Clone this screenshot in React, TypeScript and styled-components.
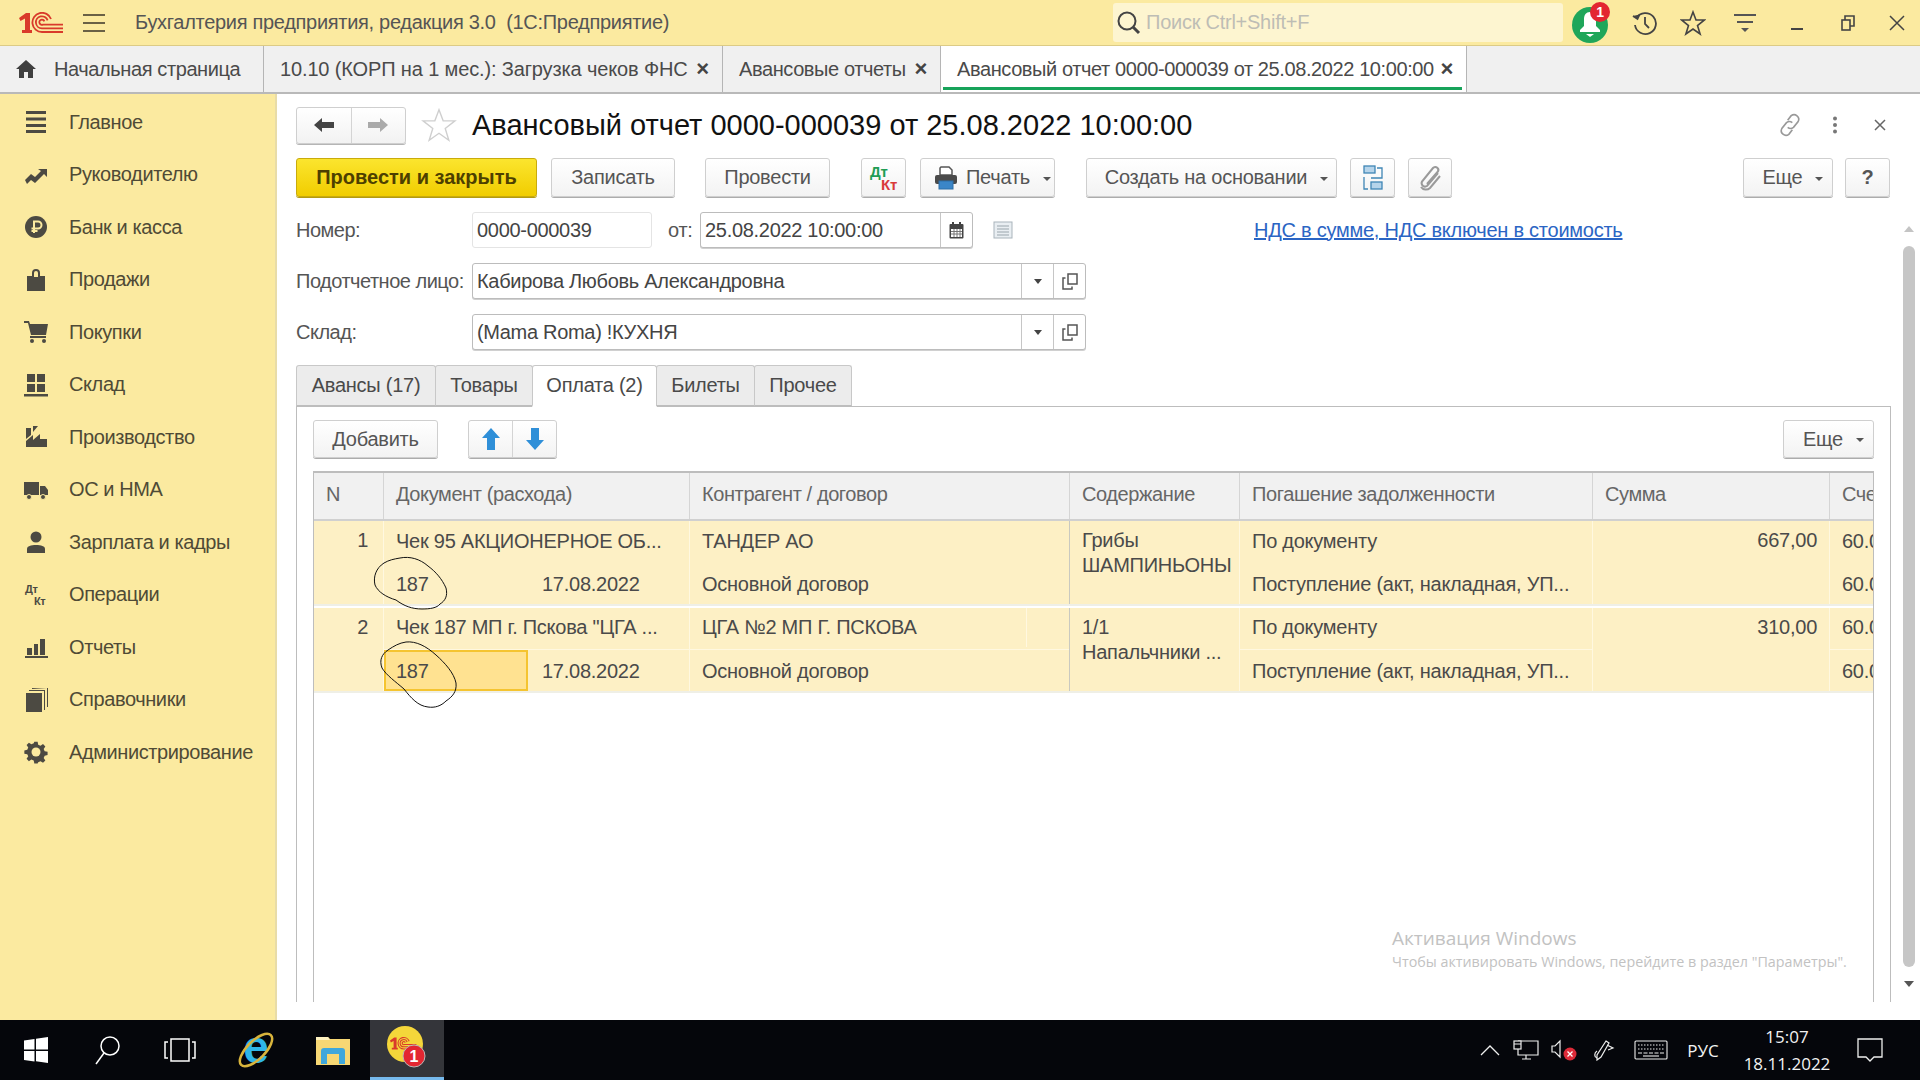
import React from "react";
import styled, { createGlobalStyle } from "styled-components";

const GlobalStyle = createGlobalStyle`
  html, body { margin: 0; padding: 0; background: #fff; }
  body { font-family: "Liberation Sans", Arial, sans-serif; color: #4a4a4a; }
  * { box-sizing: border-box; }
`;

const Page = styled.div`
  position: relative;
  width: 1920px;
  height: 1080px;
  overflow: hidden;
  display: flex;
  flex-direction: column;
  font-size: 20px;
  letter-spacing: -0.25px;
`;

/* top yellow bar */
const TopBar = styled.header`
  height: 46px;
  flex: none;
  display: flex;
  align-items: center;
  background: #fbeaa0;
  border-bottom: 1px solid #dccb86;
`;
const LogoBox = styled.div`
  width: 83px;
  padding-left: 19px;
  display: flex;
`;
const IconSlot = styled.div<{ $w: number }>`
  width: ${(p) => p.$w}px;
  flex: none;
  display: flex;
  align-items: center;
  justify-content: center;
`;
const AppTitle = styled.div`
  margin-left: 30px;
  width: 978px;
  white-space: pre;
  color: #555;
  letter-spacing: -0.3px;
`;
const SearchBox = styled.div`
  width: 450px;
  height: 39px;
  background: #fdf5d0;
  border-radius: 3px;
  display: flex;
  align-items: center;
  padding-left: 2px;
  color: #bdbdb5;
  gap: 5px;
`;

/* open windows tabs */
const TabsBar = styled.nav`
  height: 48px;
  flex: none;
  display: flex;
  background: #f0f0f0;
  border-bottom: 2px solid #b9b9b9;
`;
const WinTab = styled.div<{ $w: number; $active?: boolean; $ls?: number }>`
  position: relative;
  width: ${(p) => p.$w}px;
  flex: none;
  display: flex;
  align-items: center;
  justify-content: space-between;
  padding: 0 13px 0 16px;
  border-right: 1px solid #b5b5b5;
  background: ${(p) => (p.$active ? "#fff" : "transparent")};
  color: #4a4a4a;
  letter-spacing: ${(p) => p.$ls ?? -0.4}px;
  white-space: nowrap;
  &::after {
    content: "";
    display: ${(p) => (p.$active ? "block" : "none")};
    position: absolute;
    left: 2px;
    right: 4px;
    bottom: 2px;
    height: 3px;
    background: #17a35a;
  }
`;
const HomeTab = styled(WinTab)`
  justify-content: flex-start;
  gap: 18px;
`;
const TabClose = styled.span`
  font-weight: bold;
  font-size: 22px;
  color: #444;
`;

const Main = styled.div`
  flex: 1;
  display: flex;
  min-height: 0;
`;

/* sidebar */
const Sidebar = styled.aside`
  width: 277px;
  flex: none;
  background: #fbeaa0;
  border-right: 2px solid #e8dca8;
  padding-top: 2px;
`;
const SideItem = styled.div`
  height: 52.5px;
  display: flex;
  align-items: center;
  padding-left: 24px;
  gap: 21px;
  color: #4f4a36;
  letter-spacing: -0.4px;
`;

/* form */
const Form = styled.section`
  width: 1614px;
  flex: none;
  padding: 13px 0 18px 19px;
  display: flex;
  flex-direction: column;
  background: #fff;
`;
const HeaderRow = styled.div`
  height: 36px;
  flex: none;
  display: flex;
  align-items: center;
`;
const NavGroup = styled.div`
  width: 110px;
  height: 37px;
  flex: none;
  display: flex;
  border: 1px solid #cfcfcf;
  border-radius: 3px;
  background: linear-gradient(#fff, #f2f2f2);
  box-shadow: 0 1px 0 #b5b5b5;
`;
const NavBtn = styled.div<{ $sep?: boolean }>`
  flex: 1;
  display: flex;
  align-items: center;
  justify-content: center;
  border-right: ${(p) => (p.$sep ? "1px solid #d4d4d4" : "none")};
`;
const Title = styled.h1`
  margin: 0;
  flex: 1;
  min-width: 0;
  font-weight: normal;
  font-size: 29px;
  letter-spacing: 0;
  color: #111;
  white-space: nowrap;
`;
const HeaderTools = styled.div`
  display: flex;
  align-items: center;
  flex: none;
  margin-right: -9px;
`;

const CommandBar = styled.div`
  margin-top: 15px;
  height: 39px;
  flex: none;
  display: flex;
  align-items: stretch;
`;
const Btn = styled.div<{ $w: number; $gap?: number; $primary?: boolean }>`
  width: ${(p) => p.$w}px;
  margin-left: ${(p) => p.$gap ?? 0}px;
  flex: none;
  display: flex;
  align-items: center;
  justify-content: center;
  gap: 8px;
  border-radius: 3px;
  white-space: nowrap;
  border: 1px solid ${(p) => (p.$primary ? "#c9ab0c" : "#cfcfcf")};
  background: ${(p) =>
    p.$primary ? "linear-gradient(#fbe52e, #f1cd00)" : "linear-gradient(#fff, #f3f3f3)"};
  color: ${(p) => (p.$primary ? "#4d4000" : "#555")};
  font-weight: ${(p) => (p.$primary ? "bold" : "normal")};
  letter-spacing: ${(p) => (p.$primary ? "0" : "-0.25px")};
  box-shadow: 0 1px 0 ${(p) => (p.$primary ? "#b39a10" : "#acacac")};
`;
const Caret = styled.span`
  width: 0;
  height: 0;
  border-left: 4px solid transparent;
  border-right: 4px solid transparent;
  border-top: 4px solid #555;
  margin: 2px -10px 0 5px;
`;

const FieldRow = styled.div`
  margin-top: 15px;
  height: 36px;
  flex: none;
  display: flex;
  align-items: center;
`;
const Label = styled.div`
  width: 176px;
  flex: none;
  color: #555;
  letter-spacing: -0.5px;
  white-space: nowrap;
`;
const Field = styled.div<{ $w: number; $soft?: boolean }>`
  width: ${(p) => p.$w}px;
  height: 36px;
  flex: none;
  display: flex;
  align-items: stretch;
  border: 1px solid ${(p) => (p.$soft ? "#e4e4e4" : "#bcbcbc")};
  border-radius: 3px;
  background: #fff;
  box-shadow: ${(p) => (p.$soft ? "none" : "0 1px 0 #d0d0d0")};
`;
const FieldText = styled.div`
  flex: 1;
  display: flex;
  align-items: center;
  padding-left: 4px;
  color: #444;
  letter-spacing: -0.3px;
  white-space: nowrap;
`;
const FieldBtn = styled.div<{ $w: number }>`
  width: ${(p) => p.$w}px;
  flex: none;
  border-left: 1px solid #c6c6c6;
  display: flex;
  align-items: center;
  justify-content: center;
`;
const FromLabel = styled.div`
  margin-left: 16px;
  width: 32px;
  color: #555;
`;
const DocLink = styled.a`
  margin-left: 221px;
  color: #2b65c4;
  text-decoration: underline;
  white-space: nowrap;
`;

/* form tabs */
const FormTabs = styled.div`
  margin-top: 15px;
  height: 41px;
  flex: none;
  display: flex;
  position: relative;
  z-index: 1;
`;
const FormTab = styled.div<{ $w: number; $active?: boolean }>`
  width: ${(p) => p.$w}px;
  display: flex;
  align-items: center;
  justify-content: center;
  background: ${(p) => (p.$active ? "#fff" : "#ececec")};
  border: 1px solid #c8c8c8;
  border-bottom: ${(p) => (p.$active ? "2px solid #fff" : "1px solid #bdbdbd")};
  border-radius: 3px 3px 0 0;
  margin-left: -1px;
  color: #4a4a4a;
  height: ${(p) => (p.$active ? "42px" : "41px")};
  &:first-child {
    margin-left: 0;
  }
`;
const Panel = styled.div`
  flex: 1;
  min-height: 0;
  display: flex;
  flex-direction: column;
  padding: 13px 16px 0;
  border: 1px solid #bdbdbd;
  border-width: 1px 1px 0 1px;
`;
const PanelBar = styled.div`
  height: 38px;
  flex: none;
  display: flex;
  align-items: stretch;
  justify-content: space-between;
`;
const PanelLeft = styled.div`
  display: flex;
`;
const ArrowGroup = styled.div`
  width: 89px;
  margin-left: 30px;
  display: flex;
  border: 1px solid #cfcfcf;
  border-radius: 3px;
  background: linear-gradient(#fff, #f3f3f3);
  box-shadow: 0 1px 0 #acacac;
`;

/* table */
const Table = styled.div`
  margin-top: 13px;
  flex: 1;
  min-height: 0;
  border: 1px solid #bdbdbd;
  border-width: 2px 1px 0 1px;
  overflow: hidden;
`;
const COLS = "70px 306px 380px 170px 353px 237px 45px";
const HeadRow = styled.div`
  display: grid;
  grid-template-columns: ${COLS};
  height: 48px;
  background: #f1f1f1;
  border-bottom: 2px solid #d0d0d0;
  letter-spacing: -0.4px;
`;
const HeadCell = styled.div<{ $last?: boolean }>`
  display: flex;
  align-items: center;
  padding: 0 0 4px 12px;
  color: #666;
  border-right: ${(p) => (p.$last ? "none" : "1px solid #d5d5d5")};
  white-space: nowrap;
  overflow: hidden;
`;
const DataRow = styled.div`
  display: grid;
  grid-template-columns: ${COLS};
  height: 83px;
  margin-bottom: 4px;
  background: #fdf0c5;
  box-shadow: 0 2px 0 #efefe6;
`;
const NumCell = styled.div`
  border-right: 1px solid #fff8e0;
  padding: 8px 15px 0 0;
  text-align: right;
  color: #4a4a4a;
`;
const Col = styled.div<{ $grey?: boolean }>`
  display: grid;
  grid-template-rows: 42px 41px;
  border-right: 1px solid ${(p) => (p.$grey ? "#c9c9c0" : "#fff8e0")};
  min-width: 0;
`;
const Line = styled.div<{ $split?: boolean; $second?: boolean }>`
  display: flex;
  align-items: center;
  padding: ${(p) => (p.$second ? "1px 0 0 12px" : "0 0 2px 12px")};
  color: #4a4a4a;
  white-space: nowrap;
  overflow: hidden;
  border-bottom: ${(p) => (p.$split ? "1px solid #fff8e0" : "none")};
`;
const PartnerText = styled.div`
  width: 325px;
  height: 100%;
  display: flex;
  align-items: center;
  border-right: 1px solid #fff8e0;
`;
const DocSecond = styled.div`
  display: flex;
  align-items: stretch;
  min-width: 0;
`;
const DocNumber = styled.div<{ $selected?: boolean }>`
  width: 144px;
  flex: none;
  display: flex;
  align-items: center;
  padding: ${(p) => (p.$selected ? "1px 0 0 10px" : "1px 0 0 12px")};
  background: ${(p) => (p.$selected ? "#ffe291" : "transparent")};
  border: ${(p) => (p.$selected ? "2px solid #f5c430" : "none")};
`;
const DocDate = styled.div`
  padding: 1px 0 0 14px;
  display: flex;
  align-items: center;
`;
const TextCell = styled.div`
  border-right: 1px solid #fff8e0;
  padding: 7px 4px 0 12px;
  line-height: 24.5px;
  white-space: pre;
`;
const SumCell = styled.div`
  border-right: 1px solid #fff8e0;
  padding-top: 8px;
  padding-right: 12px;
  text-align: right;
`;

/* scrollbar gutter */
const ScrollGutter = styled.div`
  flex: 1;
  display: flex;
  flex-direction: column;
  align-items: center;
  padding: 132px 0 0 7px;
  background: #fff;
`;
const ScrollUp = styled.div`
  width: 0;
  height: 0;
  border-left: 5px solid transparent;
  border-right: 5px solid transparent;
  border-bottom: 6px solid #c4c4c4;
`;
const ScrollThumb = styled.div`
  margin-top: 14px;
  width: 12px;
  height: 721px;
  background: #c6c6c6;
  border-radius: 6px;
`;
const ScrollDown = styled.div`
  margin-top: 14px;
  width: 0;
  height: 0;
  border-left: 5px solid transparent;
  border-right: 5px solid transparent;
  border-top: 6px solid #555;
`;

/* windows taskbar */
const Taskbar = styled.footer`
  height: 60px;
  flex: none;
  display: flex;
  align-items: stretch;
  background: #05060b;
  color: #f2f2f2;
  font-family: "Open Sans", sans-serif;
  letter-spacing: 0;
`;
const TaskSlot = styled.div<{ $w: number; $active?: boolean }>`
  width: ${(p) => p.$w}px;
  flex: none;
  display: flex;
  align-items: center;
  justify-content: center;
  background: ${(p) => (p.$active ? "#34353a" : "transparent")};
  border-bottom: ${(p) => (p.$active ? "3px solid #76b9ed" : "none")};
`;
const TaskSpacer = styled.div`
  flex: 1;
`;
const Lang = styled(TaskSlot)`
  font-size: 17px;
`;
const Clock = styled.div`
  width: 118px;
  flex: none;
  display: flex;
  flex-direction: column;
  align-items: center;
  justify-content: center;
  font-size: 17px;
  line-height: 27px;
`;

/* things lying over the page */
const Watermark = styled.div`
  position: absolute;
  left: 1392px;
  top: 925px;
  font-family: "Open Sans", sans-serif;
  letter-spacing: 0;
  color: #c2c2c2;
  white-space: nowrap;
`;
const WatermarkTitle = styled.div`
  font-size: 19px;
  line-height: 27px;
`;
const WatermarkText = styled.div`
  font-size: 14.3px;
  line-height: 20px;
`;
const Scribble = styled.svg<{ $x: number; $y: number }>`
  position: absolute;
  left: ${(p) => p.$x}px;
  top: ${(p) => p.$y}px;
  fill: none;
  stroke: #111;
  stroke-width: 1;
`;

const LogoMark = () => (
  <>
    <path d="M0 6 L7 1 H11 V18 H13 V21 H3 V18 H6 V6.5 L1.5 9 Z" fill="#d93a2b" />
    <g fill="none" stroke="#d93a2b" strokeWidth="1.8">
      <path d="M44 20 H23 A9.6 9.6 0 1 1 32 7" />
      <path d="M44 16.3 H23 A6 6 0 1 1 28.6 8.4" />
      <path d="M44 12.6 H24 A2.6 2.6 0 1 1 25.4 9.4" />
    </g>
  </>
);
const Logo1C = () => (
  <svg width="44" height="21" viewBox="0 0 44 21">
    <LogoMark />
  </svg>
);

const Burger = () => (
  <svg width="22" height="18" viewBox="0 0 22 18" stroke="#6a6145" strokeWidth="2">
    <path d="M0 1h22M0 9h22M0 17h22" />
  </svg>
);

const SearchIcon = () => (
  <svg width="26" height="26" viewBox="0 0 26 26" fill="none" stroke="#444" strokeWidth="2">
    <circle cx="12" cy="11" r="8.5" />
    <path d="M18 17l6 6" strokeWidth="3" />
  </svg>
);

const Bell = () => (
  <svg width="46" height="44" viewBox="0 0 46 44">
    <circle cx="20" cy="24" r="18" fill="#1fa65a" />
    <path d="M20 11c-4 0-6 3-6 7v7l-4 4v2h20v-2l-4-4v-7c0-4-2-7-6-7z" fill="#fff" />
    <path d="M16 33h8l-4 3z" fill="#fff" />
    <circle cx="30" cy="11" r="10" fill="#e32631" />
    <text x="30" y="16" fontFamily="Liberation Sans" fontSize="14" fontWeight="bold" fill="#fff" textAnchor="middle">1</text>
  </svg>
);

const History = () => (
  <svg width="26" height="26" viewBox="0 0 26 26" fill="none" stroke="#444" strokeWidth="1.8">
    <path d="M4.5 8A10.5 10.5 0 1 1 3 15" />
    <path d="M1 6l4.5 3 2-4.5" fill="#444" />
    <path d="M13 7v7l4 4" />
  </svg>
);

const StarIcon = ({ size = 26, color = "#444", sw = 1.6 }: { size?: number; color?: string; sw?: number }) => (
  <svg width={size} height={size} viewBox="0 0 26 26" fill="none" stroke={color} strokeWidth={sw}>
    <path d="M13 2l3 8h8.5l-7 5.5 2.6 8.5L13 19l-7.100 5 2.600-8.500-7-5.500H10z" />
  </svg>
);

const FilterIcon = () => (
  <svg width="24" height="20" viewBox="0 0 24 20" stroke="#555" strokeWidth="2" fill="#555">
    <path d="M1 2h22M4 9h16" />
    <path d="M8 15h8l-4 4z" stroke="none" />
  </svg>
);

const WinMin = () => (
  <svg width="14" height="14" viewBox="0 0 14 14" stroke="#444" strokeWidth="2">
    <path d="M1 13h12" />
  </svg>
);
const WinRestore = () => (
  <svg width="14" height="16" viewBox="0 0 14 16" stroke="#444" strokeWidth="1.6" fill="none">
    <rect x="1" y="5" width="8" height="10" />
    <path d="M4 5V1h9v10H9" />
  </svg>
);
const WinClose = () => (
  <svg width="16" height="16" viewBox="0 0 16 16" stroke="#444" strokeWidth="1.5">
    <path d="M1 1l14 14M15 1L1 15" />
  </svg>
);

const HomeIcon = () => (
  <svg width="20" height="18" viewBox="0 0 20 18" fill="#3f3f3f">
    <path d="M10 0L0 9h3v9h5v-6h4v6h5V9h3z" />
  </svg>
);

const ArrowSvg = styled.svg<{ $flipX?: boolean; $flipY?: boolean }>`
  transform: scale(${(p) => (p.$flipX ? -1 : 1)}, ${(p) => (p.$flipY ? -1 : 1)});
`;

const ArrowH = ({ flip, color }: { flip?: boolean; color: string }) => (
  <ArrowSvg $flipX={flip} width="20" height="16" viewBox="0 0 20 16" fill={color}>
    <path d="M0 8l8-7v4h12v6H8v4z" />
  </ArrowSvg>
);

const ArrowV = ({ down }: { down?: boolean }) => (
  <ArrowSvg $flipY={down} width="18" height="22" viewBox="0 0 18 22">
    <path d="M9 0l9 10h-5v12H5V10H0z" fill="#2f8fd8" />
  </ArrowSvg>
);

const LinkIcon = () => (
  <svg width="28" height="28" viewBox="0 0 24 24" fill="none" stroke="#999" strokeWidth="1.4">
    <path d="M10 8l3-4a4 4 0 0 1 6 5l-4 5a4 4 0 0 1-5 0" />
    <path d="M14 16l-3 4a4 4 0 0 1-6-5l4-5a4 4 0 0 1 5 0" />
  </svg>
);

const DotsIcon = () => (
  <svg width="6" height="18" viewBox="0 0 6 18" fill="#777">
    <circle cx="3" cy="2.500" r="2" />
    <circle cx="3" cy="9" r="2" />
    <circle cx="3" cy="15.500" r="2" />
  </svg>
);

const SmallClose = () => (
  <svg width="12" height="12" viewBox="0 0 12 12" stroke="#666" strokeWidth="1.5">
    <path d="M1 1l10 10M11 1L1 11" />
  </svg>
);

const DtKt = () => (
  <svg width="30" height="30" viewBox="0 0 30 30" fontFamily="Liberation Sans" fontSize="15" fontWeight="bold">
    <text x="1" y="14" fill="#1f9d55">Дт</text>
    <text x="12" y="27" fill="#d93a3a">Кт</text>
  </svg>
);

const Printer = () => (
  <svg width="24" height="24" viewBox="0 0 24 24">
    <path d="M7 1h8l3 3v5H6V2z" fill="#fff" stroke="#555" strokeWidth="1.500" />
    <rect x="1" y="9" width="22" height="9" rx="2" fill="#4a4a4a" />
    <rect x="5" y="15" width="14" height="8" fill="#3b86c8" stroke="#2d6fa8" />
  </svg>
);

const Structure = () => (
  <svg width="20" height="25" viewBox="0 0 20 25" fill="#b6d4ea" stroke="#3f86b5" strokeWidth="1.300">
    <rect x="1" y="1" width="11" height="7" />
    <rect x="8" y="17" width="11" height="7" />
    <path d="M14 3h5v10H8M1 12v12h4" fill="none" />
  </svg>
);

const Clip = () => (
  <svg width="24" height="28" viewBox="0 0 24 28" fill="none" stroke="#9a9a9a" strokeWidth="2">
    <path d="M20 9L9 22a3.500 3.500 0 0 1-5-4.500L15 4a3 3 0 0 1 4.500 4L9 20" />
    <path d="M22 12L12 24a6 6 0 0 1-9-1" />
  </svg>
);

const CalendarIcon = () => (
  <svg width="15" height="18" viewBox="0 0 15 18">
    <rect x="0.500" y="3" width="14" height="14.500" rx="1" fill="#444" />
    <path d="M4 1v3M11 1v3" stroke="#444" strokeWidth="2" />
    <rect x="2" y="8" width="11" height="8" fill="#fff" />
    <path d="M2 10.500h11M2 13h11M5 8v8M8 8v8M11 8v8" stroke="#777" />
  </svg>
);

const NoteIcon = () => (
  <svg width="20" height="20" viewBox="0 0 20 20">
    <rect x="1" y="2" width="18" height="16" fill="#e9eef2" stroke="#a9b4bb" />
    <path d="M4 6h12M4 9h12M4 12h12M4 15h12" stroke="#9aa5ac" />
  </svg>
);

const OpenIcon = () => (
  <svg width="16" height="17" viewBox="0 0 16 17" fill="none" stroke="#555" strokeWidth="1.500">
    <rect x="6" y="1" width="9" height="10" />
    <path d="M3.500 5H1v11h9v-2.500" />
  </svg>
);

const DropCaret = styled(Caret)`
  border-left-width: 4.5px;
  border-right-width: 4.5px;
  border-top-width: 5px;
  border-top-color: #444;
  margin: 0;
`;

/* sidebar glyphs */
const sideIcons: Record<string, React.ReactNode> = {
  main: <path d="M2 1h20v3H2zM2 7.500h20v3H2zM2 14h20v3H2zM2 20h20v3H2z" />,
  boss: <path d="M1 17l6-6 4 3 6-6-3-2h9v8l-3-3-9 9-4-3-4 4z" />,
  bank: (
    <g>
      <circle cx="12" cy="12" r="11" />
      <path d="M10 18V6.500h4a3.500 3.500 0 0 1 0 7H7.500M7.500 16h6" fill="none" stroke="#fbeaa0" strokeWidth="2" />
    </g>
  ),
  sales: (
    <g>
      <path d="M3 8h5V5a4 4 0 0 1 8 0v3h5v15H3z" />
      <path d="M10 9V5a2 2 0 0 1 4 0v4z" fill="#fbeaa0" />
    </g>
  ),
  buy: (
    <g>
      <path d="M0 1h5l1 3h18l-2 11H7L4 3H0z" />
      <rect x="6" y="16" width="16" height="2" />
      <circle cx="8" cy="21" r="2" />
      <circle cx="20" cy="21" r="2" />
    </g>
  ),
  stock: <path d="M3 1h8v8H3zM13 1h8v8h-8zM3 11h8v8H3zM13 11h8v8h-8zM0 21h24v2.500H0z" />,
  prod: <path d="M2 3h5v7l-5 4zM9 1h5l-5 6zM2 22v-6l7-6v5l7-6v5l7 0v8z" />,
  truck: (
    <g>
      <path d="M0 4h15v13H0zM16 8h5l3 4v5h-8z" />
      <circle cx="5" cy="19" r="2.500" stroke="#fbeaa0" />
      <circle cx="19" cy="19" r="2.500" stroke="#fbeaa0" />
    </g>
  ),
  person: (
    <g>
      <circle cx="12" cy="7" r="5.500" />
      <path d="M3 23v-4c0-3 4-4 9-4s9 1 9 4v4z" />
    </g>
  ),
  chart: <path d="M3 13h5v7H3zM10 9h4v11h-4zM16 4h5v16h-5zM1 21h23v2H1z" />,
  books: (
    <g>
      <rect x="2" y="5" width="16" height="19" />
      <path d="M20 3v19h1V2H5v1zM23 0v19h1V0H8v1z" />
    </g>
  ),
  gear: (
    <g>
      <path d="M10 1h4l.7 3.500 2.800 1.200 3-2 2.800 2.800-2 3 1.200 2.800 3.500.7v4l-3.500.7-1.200 2.800 2 3-2.800 2.800-3-2-2.800 1.200L14 27h-4l-.7-3.500-2.800-1.200-3 2-2.800-2.800 2-3L1.500 16 -2 15.300v-4L1.500 10.600l1.200-2.800-2-3L3.500 2l3 2 2.800-1.200z" transform="translate(2 1) scale(.83)" />
      <circle cx="12" cy="12" r="4.500" fill="#fbeaa0" />
    </g>
  ),
};

const SideIcon = ({ name }: { name: string }) => (
  <svg width="24" height="24" viewBox="0 0 24 24" fill="#4c4a42">
    {sideIcons[name]}
  </svg>
);

const SideDtKt = () => (
  <svg width="24" height="24" viewBox="0 0 24 24" fontFamily="Liberation Sans" fontSize="11" fontWeight="bold" fill="#4c4a42">
    <text x="1" y="10">Дт</text>
    <text x="10" y="22">Кт</text>
  </svg>
);

const menu: { name?: string; label: string }[] = [
  { name: "main", label: "Главное" },
  { name: "boss", label: "Руководителю" },
  { name: "bank", label: "Банк и касса" },
  { name: "sales", label: "Продажи" },
  { name: "buy", label: "Покупки" },
  { name: "stock", label: "Склад" },
  { name: "prod", label: "Производство" },
  { name: "truck", label: "ОС и НМА" },
  { name: "person", label: "Зарплата и кадры" },
  { label: "Операции" },
  { name: "chart", label: "Отчеты" },
  { name: "books", label: "Справочники" },
  { name: "gear", label: "Администрирование" },
];

const heads = ["N", "Документ (расхода)", "Контрагент / договор", "Содержание", "Погашение задолженности", "Сумма", "Сче"];

/* taskbar icons */
const WinLogo = () => (
  <svg width="24" height="26" viewBox="0 0 24 26" fill="#fff">
    <path d="M0 3.500l10.500-1.500v10.500H0zM12 1.800L24 0v12.500H12zM0 14h10.500v10.500L0 23zM12 14h12v12l-12-1.800z" />
  </svg>
);
const TaskSearch = () => (
  <svg width="26" height="30" viewBox="0 0 26 30" fill="none" stroke="#fff" strokeWidth="1.500">
    <circle cx="15" cy="11" r="9" />
    <path d="M9 18L1 29" />
  </svg>
);
const TaskView = () => (
  <svg width="32" height="24" viewBox="0 0 32 24" fill="none" stroke="#fff" strokeWidth="1.500">
    <rect x="7" y="1" width="18" height="22" />
    <path d="M4 4H1v16h3M28 4h3v16h-3" />
  </svg>
);
const IeLogo = () => (
  <svg width="38" height="40" viewBox="0 0 38 40">
    <text x="19" y="33" textAnchor="middle" fontFamily="Liberation Sans" fontSize="46" fontWeight="bold" fill="#2fb6e8">e</text>
    <ellipse cx="19" cy="20" rx="21" ry="9" transform="rotate(-45 19 20)" fill="none" stroke="#d9b43c" strokeWidth="2.500" />
  </svg>
);
const FolderIcon = () => (
  <svg width="34" height="30" viewBox="0 0 34 30">
    <path d="M0 2h12l2 2h20v26H0z" fill="#f7d774" />
    <path d="M0 2h12l2 3H0z" fill="#fff2c0" />
    <path d="M5 29V16a3 3 0 0 1 3-3h18a3 3 0 0 1 3 3v13h-6V19H11v10z" fill="#3fa7dc" />
  </svg>
);
const App1C = () => (
  <svg width="40" height="46" viewBox="0 0 40 46">
    <circle cx="18" cy="18" r="18" fill="#f4d63a" />
    <g transform="translate(3 11) scale(.6)">
      <LogoMark />
    </g>
    <circle cx="27" cy="30" r="11" fill="#e32631" stroke="#b9b9b9" strokeWidth="1" />
    <text x="27" y="36" textAnchor="middle" fontFamily="Liberation Sans" fontSize="16" fontWeight="bold" fill="#fff">1</text>
  </svg>
);
const Chevron = () => (
  <svg width="20" height="12" viewBox="0 0 20 12" fill="none" stroke="#eee" strokeWidth="1.300">
    <path d="M1 11l9-9 9 9" />
  </svg>
);
const NetIcon = () => (
  <svg width="26" height="20" viewBox="0 0 26 20" fill="none" stroke="#eee" strokeWidth="1.200">
    <path d="M5 1h20v14H5V9" />
    <rect x="1" y="1" width="7" height="8" fill="#05060b" />
    <path d="M1 4h7M13 15v4M9 19h9" />
  </svg>
);
const VolIcon = () => (
  <svg width="26" height="22" viewBox="0 0 26 22">
    <path d="M1 7h3l5-5v16l-5-5H1z" fill="none" stroke="#eee" strokeWidth="1.200" />
    <circle cx="19" cy="15" r="6.500" fill="#dc2a38" />
    <path d="M16.500 12.500l5 5M21.500 12.500l-5 5" stroke="#fff" strokeWidth="1.300" />
  </svg>
);
const PenIcon = () => (
  <svg width="22" height="22" viewBox="0 0 22 22" fill="none" stroke="#eee" strokeWidth="1.200">
    <path d="M13 2l3 2-8 14-4 3 0-5zM14 6l6 3-5 2" />
    <path d="M4 12c-3 2-3 6 0 7" />
  </svg>
);
const KeyboardIcon = () => (
  <svg width="34" height="20" viewBox="0 0 34 20" fill="none" stroke="#eee" strokeWidth="1.100">
    <rect x="1" y="1" width="32" height="18" rx="1" />
    <path d="M4 5h26M4 9h26" strokeDasharray="1.500 1.500" />
    <path d="M4 13h26" strokeDasharray="4 1.500" />
    <path d="M9 16h16" />
  </svg>
);
const NotifyIcon = () => (
  <svg width="26" height="25" viewBox="0 0 26 25" fill="none" stroke="#eee" strokeWidth="1.300">
    <path d="M1 1h24v18h-8l-4 4-4-4H1z" />
  </svg>
);

export default function App() {
  return (
    <>
      <GlobalStyle />
      <Page>
        <TopBar>
          <LogoBox>
            <Logo1C />
          </LogoBox>
          <IconSlot $w={22}>
            <Burger />
          </IconSlot>
          <AppTitle>Бухгалтерия предприятия, редакция 3.0  (1С:Предприятие)</AppTitle>
          <SearchBox>
            <SearchIcon />
            Поиск Ctrl+Shift+F
          </SearchBox>
          <IconSlot $w={60}>
            <Bell />
          </IconSlot>
          <IconSlot $w={44}>
            <History />
          </IconSlot>
          <IconSlot $w={52}>
            <StarIcon />
          </IconSlot>
          <IconSlot $w={52}>
            <FilterIcon />
          </IconSlot>
          <IconSlot $w={51}>
            <WinMin />
          </IconSlot>
          <IconSlot $w={52}>
            <WinRestore />
          </IconSlot>
          <IconSlot $w={46}>
            <WinClose />
          </IconSlot>
        </TopBar>

        <TabsBar>
          <HomeTab $w={264}>
            <HomeIcon />
            Начальная страница
          </HomeTab>
          <WinTab $w={459} $ls={-0.14}>
            10.10 (КОРП на 1 мес.): Загрузка чеков ФНС
            <TabClose>×</TabClose>
          </WinTab>
          <WinTab $w={218}>
            Авансовые отчеты
            <TabClose>×</TabClose>
          </WinTab>
          <WinTab $w={526} $active>
            Авансовый отчет 0000-000039 от 25.08.2022 10:00:00
            <TabClose>×</TabClose>
          </WinTab>
        </TabsBar>

        <Main>
          <Sidebar>
            {menu.map((m) => (
              <SideItem key={m.label}>
                {m.name ? <SideIcon name={m.name} /> : <SideDtKt />}
                {m.label}
              </SideItem>
            ))}
          </Sidebar>

          <Form>
            <HeaderRow>
              <NavGroup>
                <NavBtn $sep>
                  <ArrowH color="#444" />
                </NavBtn>
                <NavBtn>
                  <ArrowH flip color="#aaa" />
                </NavBtn>
              </NavGroup>
              <IconSlot $w={66}>
                <StarIcon size={36} color="#cfcfcf" sw={1} />
              </IconSlot>
              <Title>Авансовый отчет 0000-000039 от 25.08.2022 10:00:00</Title>
              <HeaderTools>
                <IconSlot $w={40}>
                  <LinkIcon />
                </IconSlot>
                <IconSlot $w={50}>
                  <DotsIcon />
                </IconSlot>
                <IconSlot $w={40}>
                  <SmallClose />
                </IconSlot>
              </HeaderTools>
            </HeaderRow>

            <CommandBar>
              <Btn $w={241} $primary>Провести и закрыть</Btn>
              <Btn $w={124} $gap={14}>Записать</Btn>
              <Btn $w={125} $gap={30}>Провести</Btn>
              <Btn $w={45} $gap={31}><DtKt /></Btn>
              <Btn $w={135} $gap={14}>
                <Printer />
                Печать
                <Caret />
              </Btn>
              <Btn $w={251} $gap={31}>
                Создать на основании
                <Caret />
              </Btn>
              <Btn $w={45} $gap={13}><Structure /></Btn>
              <Btn $w={44} $gap={13}><Clip /></Btn>
              <Btn $w={90} $gap={291}>
                Еще
                <Caret />
              </Btn>
              <Btn $w={45} $gap={12}><b>?</b></Btn>
            </CommandBar>

            <FieldRow>
              <Label>Номер:</Label>
              <Field $w={180} $soft>
                <FieldText>0000-000039</FieldText>
              </Field>
              <FromLabel>от:</FromLabel>
              <Field $w={273}>
                <FieldText>25.08.2022 10:00:00</FieldText>
                <FieldBtn $w={32}>
                  <CalendarIcon />
                </FieldBtn>
              </Field>
              <IconSlot $w={60}>
                <NoteIcon />
              </IconSlot>
              <DocLink>НДС в сумме, НДС включен в стоимость</DocLink>
            </FieldRow>
            <FieldRow>
              <Label>Подотчетное лицо:</Label>
              <Field $w={614}>
                <FieldText>Кабирова Любовь Александровна</FieldText>
                <FieldBtn $w={32}>
                  <DropCaret />
                </FieldBtn>
                <FieldBtn $w={32}>
                  <OpenIcon />
                </FieldBtn>
              </Field>
            </FieldRow>
            <FieldRow>
              <Label>Склад:</Label>
              <Field $w={614}>
                <FieldText>(Mama Roma) !КУХНЯ</FieldText>
                <FieldBtn $w={32}>
                  <DropCaret />
                </FieldBtn>
                <FieldBtn $w={32}>
                  <OpenIcon />
                </FieldBtn>
              </Field>
            </FieldRow>

            <FormTabs>
              <FormTab $w={140}>Авансы (17)</FormTab>
              <FormTab $w={98}>Товары</FormTab>
              <FormTab $w={125} $active>Оплата (2)</FormTab>
              <FormTab $w={99}>Билеты</FormTab>
              <FormTab $w={98}>Прочее</FormTab>
            </FormTabs>
            <Panel>
              <PanelBar>
                <PanelLeft>
                  <Btn $w={125}>Добавить</Btn>
                  <ArrowGroup>
                    <NavBtn $sep><ArrowV /></NavBtn>
                    <NavBtn><ArrowV down /></NavBtn>
                  </ArrowGroup>
                </PanelLeft>
                <Btn $w={91}>
                  Еще
                  <Caret />
                </Btn>
              </PanelBar>
              <Table>
                <HeadRow>
                  {heads.map((h, i) => (
                    <HeadCell key={h} $last={i === heads.length - 1}>{h}</HeadCell>
                  ))}
                </HeadRow>
                <DataRow>
                  <NumCell>1</NumCell>
                  <Col>
                    <Line>Чек 95 АКЦИОНЕРНОЕ ОБ...</Line>
                    <DocSecond>
                      <DocNumber>187</DocNumber>
                      <DocDate>17.08.2022</DocDate>
                    </DocSecond>
                  </Col>
                  <Col $grey>
                    <Line>ТАНДЕР АО</Line>
                    <Line $second>Основной договор</Line>
                  </Col>
                  <TextCell>{"Грибы\nШАМПИНЬОНЫ"}</TextCell>
                  <Col>
                    <Line>По документу</Line>
                    <Line $second>Поступление (акт, накладная, УП...</Line>
                  </Col>
                  <SumCell>667,00</SumCell>
                  <Col>
                    <Line>60.01</Line>
                    <Line $second>60.02</Line>
                  </Col>
                </DataRow>
                <DataRow>
                  <NumCell>2</NumCell>
                  <Col>
                    <Line $split>Чек 187 МП г. Пскова "ЦГА ...</Line>
                    <DocSecond>
                      <DocNumber $selected>187</DocNumber>
                      <DocDate>17.08.2022</DocDate>
                    </DocSecond>
                  </Col>
                  <Col $grey>
                    <Line $split>
                      <PartnerText>ЦГА №2 МП Г. ПСКОВА</PartnerText>
                    </Line>
                    <Line $second>Основной договор</Line>
                  </Col>
                  <TextCell>{"1/1\nНапальчники ..."}</TextCell>
                  <Col>
                    <Line $split>По документу</Line>
                    <Line $second>Поступление (акт, накладная, УП...</Line>
                  </Col>
                  <SumCell>310,00</SumCell>
                  <Col>
                    <Line $split>60.01</Line>
                    <Line $second>60.02</Line>
                  </Col>
                </DataRow>
              </Table>
            </Panel>
          </Form>

          <ScrollGutter>
            <ScrollUp />
            <ScrollThumb />
            <ScrollDown />
          </ScrollGutter>
        </Main>

        <Taskbar>
          <TaskSlot $w={72}><WinLogo /></TaskSlot>
          <TaskSlot $w={72}><TaskSearch /></TaskSlot>
          <TaskSlot $w={72}><TaskView /></TaskSlot>
          <TaskSlot $w={80}><IeLogo /></TaskSlot>
          <TaskSlot $w={74}><FolderIcon /></TaskSlot>
          <TaskSlot $w={74} $active><App1C /></TaskSlot>
          <TaskSpacer />
          <TaskSlot $w={36}><Chevron /></TaskSlot>
          <TaskSlot $w={36}><NetIcon /></TaskSlot>
          <TaskSlot $w={40}><VolIcon /></TaskSlot>
          <TaskSlot $w={40}><PenIcon /></TaskSlot>
          <TaskSlot $w={54}><KeyboardIcon /></TaskSlot>
          <Lang $w={50}>РУС</Lang>
          <Clock>
            <div>15:07</div>
            <div>18.11.2022</div>
          </Clock>
          <TaskSlot $w={48}><NotifyIcon /></TaskSlot>
          <TaskSlot $w={26} />
        </Taskbar>

        <Watermark>
          <WatermarkTitle>Активация Windows</WatermarkTitle>
          <WatermarkText>Чтобы активировать Windows, перейдите в раздел "Параметры".</WatermarkText>
        </Watermark>
        <Scribble $x={372} $y={555} width="80" height="58" viewBox="0 0 80 58">
          <path d="M28 3c10-2 20 1 28 8 8 6 14 13 18 22 2 8-1 13-6 16-3 4-10 5-18 5-10 0-18-3-26-9C14 42 6 37 3 30 1 22 4 13 12 8c5-3 10-4 16-5z" />
        </Scribble>
        <Scribble $x={378} $y={640} width="84" height="70" viewBox="0 0 84 70">
          <path d="M28 2c10-1 20 4 30 13 9 8 18 18 20 28 1 9-4 14-10 18-5 5-11 7-18 6-10-1-17-9-24-18C18 42 8 35 4 28 1 20 4 14 10 10c6-4 11-7 18-8z" />
        </Scribble>
      </Page>
    </>
  );
}
